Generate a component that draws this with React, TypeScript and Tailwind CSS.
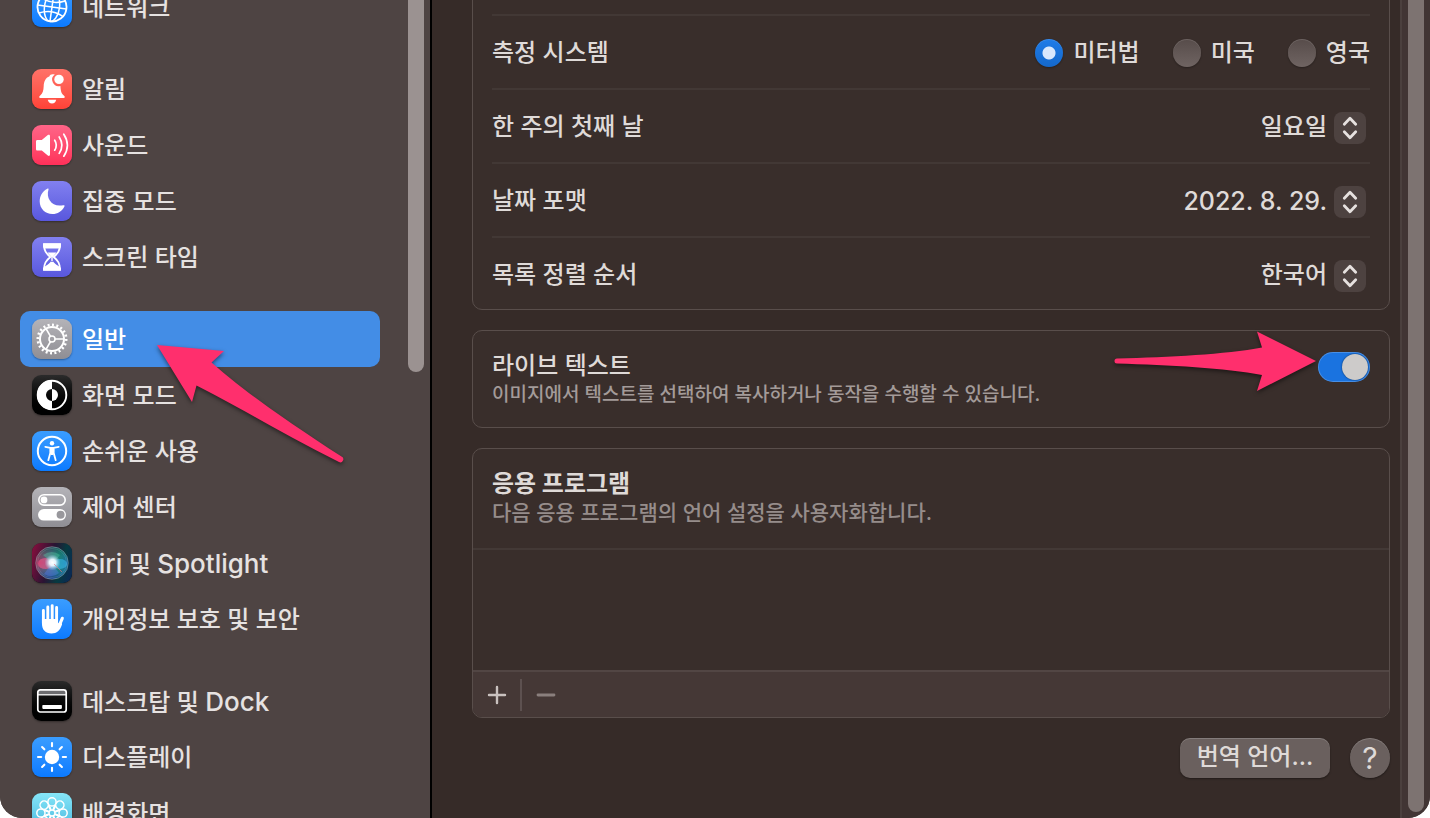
import type { ReactNode } from "react";

const ray = (deg: number) => `rotate(${deg} 20 20)`;

function GlobeIcon() {
  return (
    <g fill="none" stroke="#fff" strokeWidth="1.5" transform="rotate(8 20 20)">
      <circle cx="20" cy="20" r="14.5" strokeWidth="1.8" />
      <ellipse cx="20" cy="20" rx="7.5" ry="14.5" />
      <path d="M20 5.5v29M5.5 20h29M8 12.2q12 6 24 0M8 27.8q12 -6 24 0" />
    </g>
  );
}

function BellIcon() {
  return (
    <g fill="#fff">
      <path d="M20.6 5.2c.8 0 1.5.1 2.2.4a6.4 6.4 0 0 0 5.6 11.3c.3 5.6 1.2 7.7 3.4 9.5 1.4 1.1 1.3 2.6-.2 2.6H8.4c-1.5 0-1.6-1.5-.2-2.6 2.5-2 3.3-4.8 3.5-9.4.2-5 2-8.3 5.6-9.6.5-1.3 1.7-2.2 3.3-2.2z" />
      <circle cx="27" cy="10.4" r="4.7" />
      <path d="M15.8 30.7h8.4c-.4 2.3-1.9 3.7-4.2 3.7s-3.8-1.4-4.2-3.7z" />
    </g>
  );
}

function SpeakerIcon() {
  return (
    <g>
      <path fill="#fff" d="M5.5 15h4.3l6-4.9c1-.8 2.2-.4 2.2.9v18.6c0 1.3-1.2 1.7-2.2.9l-6-4.9H5.5c-1 0-1.5-.5-1.5-1.5v-7.600c0-1 .5-1.500 1.500-1.500z" />
      <g fill="none" stroke="#fff" strokeWidth="1.7" strokeLinecap="round">
        <path d="M22.7 15.2q3.2 5 0 10" />
        <path d="M27.2 12q5.400 8.300 0 16.400" />
        <path d="M31.8 9.200q7.200 11 0 22" />
      </g>
    </g>
  );
}

function MoonIcon() {
  return (
    <path fill="#fff" d="M15.3 7.7c.9-.5 1.5 0 1.2.9C13.6 18 20.5 26.600 31.200 24.200c1.100-.2 1.700.3 1.200 1.200-2.400 4.800-6.800 7.600-12 7.600C13.300 33 7.700 27.600 7.700 20.500c0-5.600 2.700-10.400 7.600-12.800z" />
  );
}

function HourglassIcon() {
  return (
    <g>
      <path fill="none" stroke="#fff" strokeWidth="1.8" strokeLinejoin="round" d="M12 7.500h16c0 6.200-2 8.800-6.300 12.500 4.300 3.700 6.300 6.300 6.300 12.500H12c0-6.200 2-8.800 6.300-12.500C14 16.300 12 13.700 12 7.500z" />
      <path fill="#fff" d="M11 6.300h18v2.500c0 1.800-.6 2.700-2 2.700H13c-1.400 0-2-.9-2-2.700zM11 33.700h18v-2.500c-1-2-5-2.700-8.300-7.200h-1.400C16 28.500 12 29.200 11 31.200zM15.500 15.500h9L20.700 20v5h-1.400v-5z" />
    </g>
  );
}

function GearIcon() {
  return (
    <g fill="none" stroke="#fff">
      <circle cx="20" cy="20" r="12" strokeWidth="2" />
      <circle cx="20" cy="20" r="14.2" strokeWidth="2.6" pathLength="40" strokeDasharray="0.9 1.1" />
      <circle cx="20" cy="20" r="3" strokeWidth="1.5" />
      <path strokeWidth="1.7" d="M23 20h9M18.500 17.400 14 9.600M18.500 22.600 14 30.400" />
    </g>
  );
}

function AppearanceIcon() {
  return (
    <g>
      <circle cx="20" cy="20" r="14.3" fill="none" stroke="#fff" strokeWidth="1.9" />
      <path fill="#fff" d="M20 5a15 15 0 0 0 0 30v-9a6 6 0 0 1 0-12z" />
      <path fill="#fff" d="M20 14a6 6 0 0 1 0 12z" />
    </g>
  );
}

function AccessibilityIcon() {
  return (
    <g>
      <circle cx="20" cy="20" r="14.2" fill="none" stroke="#fff" strokeWidth="2" />
      <circle cx="20" cy="12.3" r="2.2" fill="#fff" />
      <path fill="none" stroke="#fff" strokeWidth="1.8" strokeLinecap="round" strokeLinejoin="round" d="M13.300 15.800l5 1.100h3.400l5-1.100M18.300 17v5l-2 7.200M21.700 17v5l2 7.200" />
      <path fill="#fff" d="M18 16.500h4v6l-1 1.500h-2l-1-1.500z" />
    </g>
  );
}

function ControlCenterIcon() {
  return (
    <g>
      <rect x="6.8" y="7.7" width="26.4" height="10.4" rx="5.2" fill="none" stroke="#fff" strokeWidth="1.6" />
      <circle cx="12" cy="12.9" r="3.4" fill="#fff" />
      <rect x="6" y="22" width="28" height="11.6" rx="5.8" fill="#fff" />
      <circle cx="28.6" cy="27.8" r="4" fill="#98979c" />
    </g>
  );
}

function SiriIcon() {
  return (
    <g>
      <defs>
        <linearGradient id="siri-back" x1="0" y1="0.3" x2="1" y2="0.6">
          <stop offset="0" stopColor="#7d0f3c" />
          <stop offset="0.45" stopColor="#2a1433" />
          <stop offset="0.75" stopColor="#063a40" />
          <stop offset="1" stopColor="#0a2b52" />
        </linearGradient>
        <linearGradient id="siri-orb" x1="0" y1="0.4" x2="1" y2="0.5">
          <stop offset="0" stopColor="#a82455" />
          <stop offset="0.45" stopColor="#5f5488" />
          <stop offset="0.7" stopColor="#187a78" />
          <stop offset="1" stopColor="#1562a4" />
        </linearGradient>
        <linearGradient id="siri-shade" x1="0" y1="0" x2="0" y2="1">
          <stop offset="0" stopColor="#0b4c44" stopOpacity="0.7" />
          <stop offset="0.5" stopColor="#33bb88" stopOpacity="0" />
          <stop offset="1" stopColor="#14388f" stopOpacity="0.9" />
        </linearGradient>
        <radialGradient id="siri-glow">
          <stop offset="0" stopColor="#fff" />
          <stop offset="0.4" stopColor="#eef9ff" stopOpacity="0.95" />
          <stop offset="1" stopColor="#9fd8f0" stopOpacity="0" />
        </radialGradient>
      </defs>
      <rect width="40" height="40" rx="9" fill="url(#siri-back)" />
      <circle cx="20" cy="20" r="16" fill="url(#siri-orb)" />
      <circle cx="20" cy="20" r="16" fill="url(#siri-shade)" />
      <ellipse cx="13.5" cy="20.5" rx="7.5" ry="5.5" fill="#ff5b8d" opacity="0.55" />
      <ellipse cx="28" cy="21" rx="7" ry="5" fill="#39b9ea" opacity="0.6" />
      <path d="M11 12q9-6 17 0l-7 9z" fill="#57d6a6" opacity="0.35" />
      <path d="M20 20l-8 11q8 5 15-1z" fill="#5a7df0" opacity="0.4" />
      <circle cx="20.5" cy="19.5" r="8" fill="url(#siri-glow)" />
      <path d="M22 21l8 8" stroke="#e8707e" strokeWidth="0.9" opacity="0.7" />
      <circle cx="20" cy="20" r="16.3" fill="none" stroke="#a9c9cb" strokeWidth="0.9" opacity="0.5" />
      <circle cx="20" cy="20" r="14.6" fill="none" stroke="#c5dde2" strokeWidth="0.5" opacity="0.3" />
    </g>
  );
}

function HandIcon() {
  return (
    <g>
      <g fill="none" stroke="#fff" strokeLinecap="round" strokeWidth="2.9">
        <path d="M11.4 11.5V24M15.8 8V22M20.2 6.6V22M24.6 8.5V22" />
        <path strokeWidth="3.1" d="M30.3 19.3 26.6 28" />
      </g>
      <path fill="#fff" d="M9.950 20h16.100v4.500l3-3 1 4C28 31.500 25 34.500 19.500 34.500c-6 0-9.550-3.800-9.550-10z" />
    </g>
  );
}

function DockIcon() {
  return (
    <g>
      <path fill="#6d6d70" d="M6 9h28v4.5H6z" />
      <rect x="5.8" y="8.8" width="28.4" height="22.2" rx="2.5" fill="none" stroke="#fff" strokeWidth="1.7" />
      <path stroke="#fff" strokeWidth="1.3" d="M6 13.8h28" />
      <rect x="10.3" y="24" width="19.6" height="3.9" rx="0.8" fill="#fff" />
    </g>
  );
}

const octants = [0, 45, 90, 135, 180, 225, 270, 315];

function SunIcon() {
  return (
    <g fill="#fff">
      <circle cx="20" cy="20" r="7.2" />
      {octants.map((d) => (
        <path key={d} d="M20 9.2V6" stroke="#fff" strokeWidth="2.1" strokeLinecap="round" transform={ray(d)} />
      ))}
    </g>
  );
}

function FlowerIcon() {
  return (
    <g fill="none" stroke="#fff" strokeWidth="1.5">
      <circle cx="20" cy="20" r="3" />
      {octants.map((d) => (
        <g key={d} transform={ray(d)}>
          <circle cx="20" cy="8.9" r="4.1" />
          <path d="M17.2 12 19 17M22.8 12 21 17" />
        </g>
      ))}
    </g>
  );
}

type Item = { label: string; tile: string; icon: ReactNode; selected?: boolean };

const blue = "bg-linear-to-b from-[#3a9dff] to-[#0a7aff]";
const indigo = "bg-linear-to-b from-[#8280f0] to-[#5957dd]";
const gray = "bg-linear-to-b from-[#b4b3b8] to-[#8f8e94]";
const black = "bg-linear-to-b from-[#2b2b2b] to-[#000000]";

const groups: Item[][] = [
  [{ label: "네트워크", tile: blue, icon: <GlobeIcon /> }],
  [
    { label: "알림", tile: "bg-linear-to-b from-[#ff7268] to-[#ff4237]", icon: <BellIcon /> },
    { label: "사운드", tile: "bg-linear-to-b from-[#ff6488] to-[#ff2f59]", icon: <SpeakerIcon /> },
    { label: "집중 모드", tile: indigo, icon: <MoonIcon /> },
    { label: "스크린 타임", tile: indigo, icon: <HourglassIcon /> },
  ],
  [
    { label: "일반", tile: gray, icon: <GearIcon />, selected: true },
    { label: "화면 모드", tile: black, icon: <AppearanceIcon /> },
    { label: "손쉬운 사용", tile: blue, icon: <AccessibilityIcon /> },
    { label: "제어 센터", tile: gray, icon: <ControlCenterIcon /> },
    { label: "Siri 및 Spotlight", tile: black, icon: <SiriIcon /> },
    { label: "개인정보 보호 및 보안", tile: blue, icon: <HandIcon /> },
  ],
  [
    { label: "데스크탑 및 Dock", tile: black, icon: <DockIcon /> },
    { label: "디스플레이", tile: blue, icon: <SunIcon /> },
    { label: "배경화면", tile: "bg-linear-to-b from-[#86e6f8] to-[#3fb4dc]", icon: <FlowerIcon /> },
  ],
];

/* Latin words are set slightly larger than the Hangul around them. */
function MixedText({ text }: { text: string }) {
  return (
    <>
      {text.split(/([A-Za-z]+)/).map((part, i) =>
        i % 2 ? (
          <span key={i} className="text-[26px]">{part}</span>
        ) : (
          part
        ),
      )}
    </>
  );
}

function SidebarItem({ item }: { item: Item }) {
  return (
    <li className="relative">
      <a
        href="#"
        aria-current={item.selected ? "page" : undefined}
        className={
          item.selected
            ? "flex h-14 items-center gap-2.5 rounded-[10px] bg-[#438de6] px-3 text-white"
            : "flex h-14 items-center gap-2.5 rounded-[10px] px-3"
        }
      >
        <span className={`${item.tile} size-10 shrink-0 rounded-[9px] shadow-[0_1px_2px_rgba(0,0,0,0.35)]`}>
          <svg viewBox="0 0 40 40" className="size-10" aria-hidden="true">
            {item.icon}
          </svg>
        </span>
        <span className="pt-0.5 leading-8 whitespace-nowrap">
          <MixedText text={item.label} />
        </span>
      </a>
      {item.selected && (
        <svg
          viewBox="0 0 200 130"
          className="pointer-events-none absolute top-7 left-[130px] z-10 h-[130px] w-[200px] drop-shadow-[0_2px_2px_rgba(0,0,0,0.5)]"
          aria-hidden="true"
        >
          <path
            fill="#ff2f6d"
            d="M7 6 74 12 61.5 23.5C97 55 143 86 191.5 117.500a3 3 0 0 1-2.500 5.500C140 99 95 71 46.500 46.500L42 63z"
          />
        </svg>
      )}
    </li>
  );
}

function Row({ label, htmlFor, children }: { label: string; htmlFor: string; children: ReactNode }) {
  return (
    <div className="flex h-[74px] items-center justify-between border-t-2 border-[#423835] pt-0.5 last:h-[73px]">
      <label htmlFor={htmlFor} className="leading-8">{label}</label>
      {children}
    </div>
  );
}

function Popup({ id, value, numeric }: { id: string; value: string; numeric?: boolean }) {
  return (
    <div className="relative flex items-center pr-1">
      <select
        id={id}
        defaultValue={value}
        className={
          numeric
            ? "field-sizing-content cursor-default appearance-none bg-transparent pr-[39px] text-right text-[25px] leading-8 outline-none"
            : "field-sizing-content cursor-default appearance-none bg-transparent pr-[39px] text-right leading-8 outline-none"
        }
      >
        <option>{value}</option>
      </select>
      <span className="pointer-events-none absolute right-1 flex size-8 translate-y-px items-center justify-center rounded-lg bg-[#4d4240]">
        <svg viewBox="0 0 32 32" className="size-8" fill="none" stroke="#e6e1df" strokeWidth="2.8" strokeLinecap="round" strokeLinejoin="round" aria-hidden="true">
          <path d="M10.3 12.3 16 6.3l5.7 6M10.3 19.7l5.7 6 5.7-6" />
        </svg>
      </span>
    </div>
  );
}

function Radio({ label, checked }: { label: string; checked?: boolean }) {
  return (
    <label className="flex items-center gap-2.5">
      <input
        type="radio"
        name="measure"
        defaultChecked={checked}
        className="size-7 appearance-none rounded-full bg-linear-to-b from-[#574c4a] to-[#6f6462] shadow-[0_1px_2px_rgba(0,0,0,0.3),inset_0_1px_0_rgba(255,255,255,0.12)] checked:bg-[radial-gradient(circle,#d9e8fd_6px,transparent_7px),linear-gradient(#1f7ce8,#1468cb)]"
      />
      <span className="leading-8">{label}</span>
    </label>
  );
}

const card = "rounded-[10px] border border-[#594e4b] bg-[#392e2b]";

export default function App() {
  return (
    <div className="h-screen bg-white font-['Inter','Noto_Sans_CJK_KR',sans-serif] text-[24px] font-medium">
      <div className="flex h-full overflow-hidden rounded-b-[22px] bg-[#362b28]">
        <aside className="flex w-[432px] shrink-0 border-r-2 border-black bg-[#4e4443] pr-1.5 pl-5 text-[#e6e2e1]">
          <nav className="-mt-[21px] flex-1">
            <div className="flex flex-col gap-[26px]">
              {groups.map((group) => (
                <ul key={group[0].label}>
                  {group.map((item) => (
                    <SidebarItem key={item.label} item={item} />
                  ))}
                </ul>
              ))}
            </div>
          </nav>
          <div className="ml-7 h-[372px] w-4 rounded-b-full bg-[#9b9291]" />
        </aside>

        <main className="-mt-5 flex min-w-0 flex-1 flex-col gap-5 pr-2.5 pl-10 text-[#dfdad8]">
          <section className={`${card} px-[19px]`}>
            <div className="h-[33px]" />
            <div
              role="radiogroup"
              aria-labelledby="measure-label"
              className="flex h-[74px] items-center justify-between border-t-2 border-[#423835] pt-0.5"
            >
              <span id="measure-label" className="leading-8">측정 시스템</span>
              <div className="flex gap-[33px]">
                <Radio label="미터법" checked />
                <Radio label="미국" />
                <Radio label="영국" />
              </div>
            </div>
            <Row label="한 주의 첫째 날" htmlFor="first-day">
              <Popup id="first-day" value="일요일" />
            </Row>
            <Row label="날짜 포맷" htmlFor="date-format">
              <Popup id="date-format" value="2022. 8. 29." numeric />
            </Row>
            <Row label="목록 정렬 순서" htmlFor="sort-order">
              <Popup id="sort-order" value="한국어" />
            </Row>
          </section>

          <section className={`${card} relative flex items-start justify-between px-[19px] pt-[19px] pb-[19px]`}>
            <div className="flex flex-col">
              <label htmlFor="live-text" className="leading-8">라이브 텍스트</label>
              <p className="text-[19px] leading-[26px] text-[#a39b99]">
                이미지에서 텍스트를 선택하여 복사하거나 동작을 수행할 수 있습니다.
              </p>
            </div>
            <input
              id="live-text"
              type="checkbox"
              role="switch"
              defaultChecked
              className="mt-0.5 flex h-[30px] w-[52px] appearance-none items-center rounded-full bg-[#6a605e] p-0.5 shadow-[inset_0_0_0_1px_rgba(255,255,255,0.2)] before:size-[26px] before:rounded-full before:bg-[#cdcbca] before:shadow-[0_0_2px_rgba(0,0,0,0.6)] checked:justify-end checked:bg-[#1a73e0]"
            />
            <svg
              viewBox="0 0 210 70"
              className="pointer-events-none absolute -top-[5px] right-[69px] h-[70px] w-[210px] drop-shadow-[0_2px_2px_rgba(0,0,0,0.5)]"
              aria-hidden="true"
            >
              <path fill="#ff2f6d" d="M206 35 147 5.5 152 21.5C115 28.5 60 31 7 32.5a2.5 2.5 0 0 0 0 5C60 39 115 42 152 49L147 65z" />
            </svg>
          </section>

          <section className={`${card} flex flex-col overflow-hidden`}>
            <header className="flex h-[99px] flex-col px-[19px] pt-[19px]">
              <h2 className="leading-8 font-bold">응용 프로그램</h2>
              <p className="text-[21px] leading-[26px] text-[#968d8b]">다음 응용 프로그램의 언어 설정을 사용자화합니다.</p>
            </header>
            <div className="h-[122px] border-t-2 border-[#433936]" />
            <footer className="flex h-[47px] items-center border-t-2 border-[#524644] bg-[#453836]">
              <button type="button" aria-label="추가" className="flex h-8 w-[49px] items-center justify-center border-r-2 border-[#5d5150]">
                <svg viewBox="0 0 20 20" className="size-5" stroke="#c9c1bf" strokeWidth="2.4" strokeLinecap="round" aria-hidden="true">
                  <path d="M10 2v16M2 10h16" />
                </svg>
              </button>
              <button type="button" aria-label="제거" disabled className="flex h-8 w-12 items-center justify-center">
                <svg viewBox="0 0 20 20" className="size-5" stroke="#8a7f7d" strokeWidth="2.8" strokeLinecap="round" aria-hidden="true">
                  <path d="M2 10h16" />
                </svg>
              </button>
            </footer>
          </section>

          <div className="flex justify-end gap-5">
            <button type="button" className="flex h-10 w-[150px] items-center justify-center rounded-[10px] bg-[#6a605e] pb-0.5 leading-8 whitespace-nowrap shadow-[0_1px_2px_rgba(0,0,0,0.4),inset_0_1px_0_rgba(255,255,255,0.18)]">
              번역 언어...
            </button>
            <button type="button" aria-label="도움말" className="flex size-10 items-center justify-center rounded-full bg-[#6a605e] text-[30px] leading-8 font-normal shadow-[0_1px_2px_rgba(0,0,0,0.4),inset_0_1px_0_rgba(255,255,255,0.18)]">
              ?
            </button>
          </div>
        </main>

        <div className="flex w-[30px] shrink-0 justify-end border-l-2 border-[#4b403e] bg-[#413534] pr-1.5 pb-1.5">
          <div className="w-4 rounded-b-full bg-[#7d7371]" />
        </div>
      </div>
    </div>
  );
}
